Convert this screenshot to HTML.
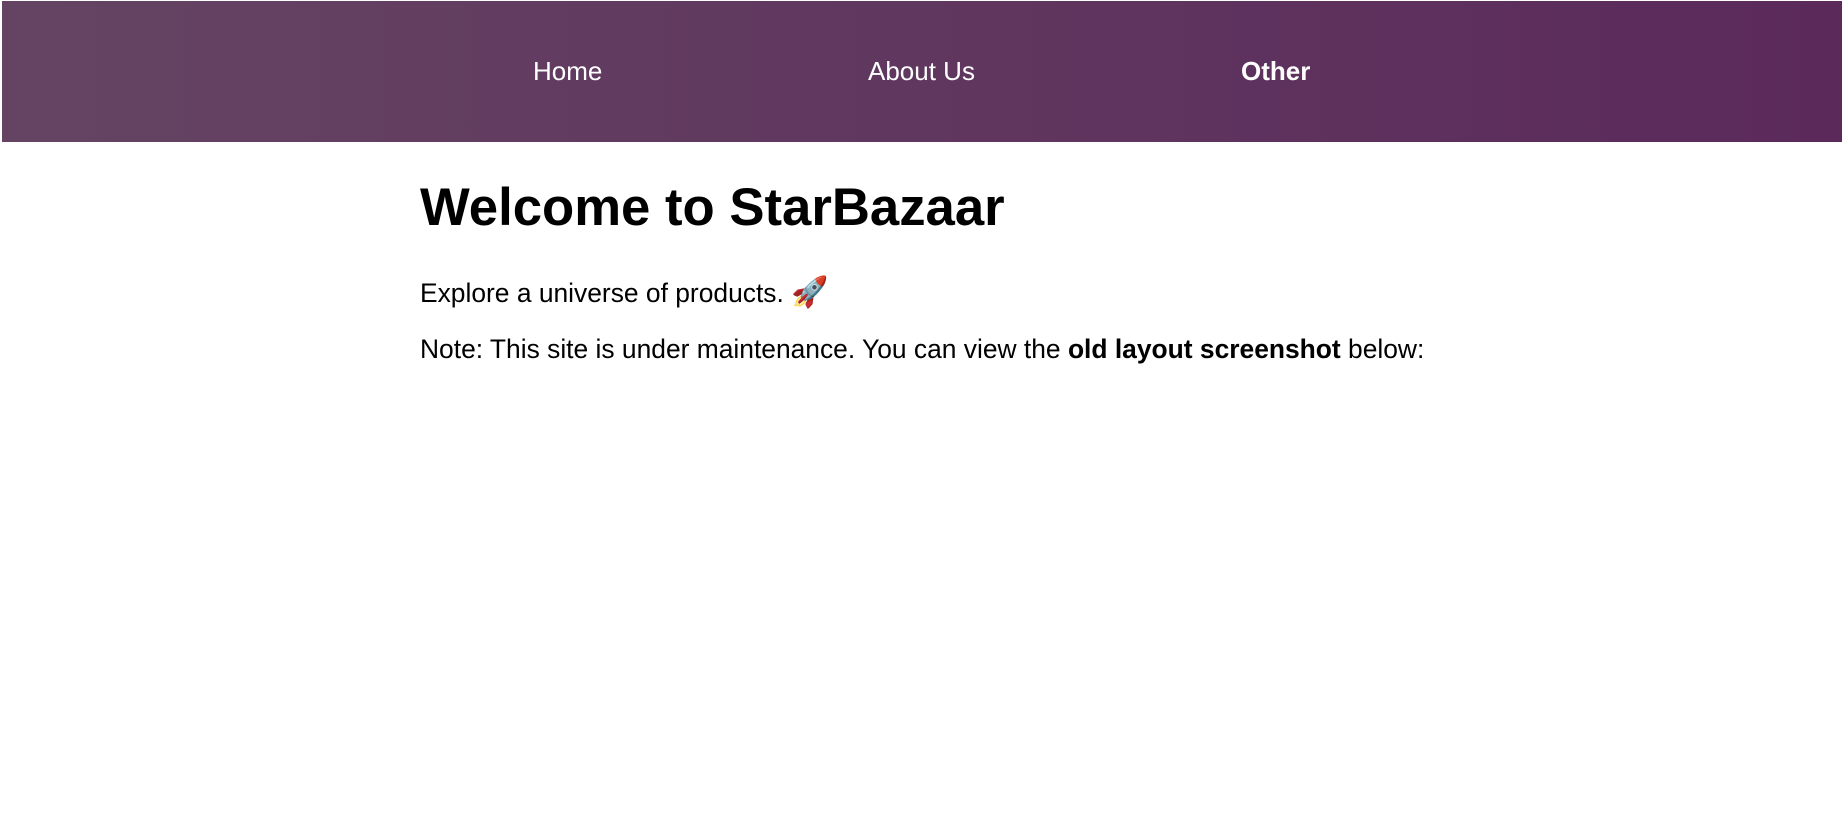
<!DOCTYPE html>
<html><head><meta charset="utf-8"><style>
html,body{margin:0;padding:0;background:#fff;width:1846px;height:831px;overflow:hidden;font-family:"Liberation Sans",Arial,sans-serif;}
nav{position:absolute;left:2px;top:1px;width:1840px;height:141px;background:linear-gradient(90deg,#654463,#5b2a5b);}
nav a{position:absolute;top:55px;color:#fff;font-size:26px;line-height:30px;text-decoration:none;white-space:nowrap;}
.t{position:absolute;left:420px;margin:0;white-space:nowrap;color:#000;}
h1.t{font-size:52.7px;line-height:60px;top:178px;font-weight:bold;}
p.t{font-size:26.4px;line-height:30px;}
</style></head><body>
<nav>
<a style="left:531px">Home</a>
<a style="left:866px">About Us</a>
<a style="left:1239px;font-weight:bold">Other</a>
</nav>
<h1 class="t">Welcome to StarBazaar</h1>
<p class="t" style="top:278px">Explore a universe of products. <span style="font-family:'Noto Color Emoji',sans-serif;font-size:30px">🚀</span></p>
<p class="t" style="top:334px">Note: This site is under maintenance. You can view the <b>old layout screenshot</b> below:</p>
</body></html>
